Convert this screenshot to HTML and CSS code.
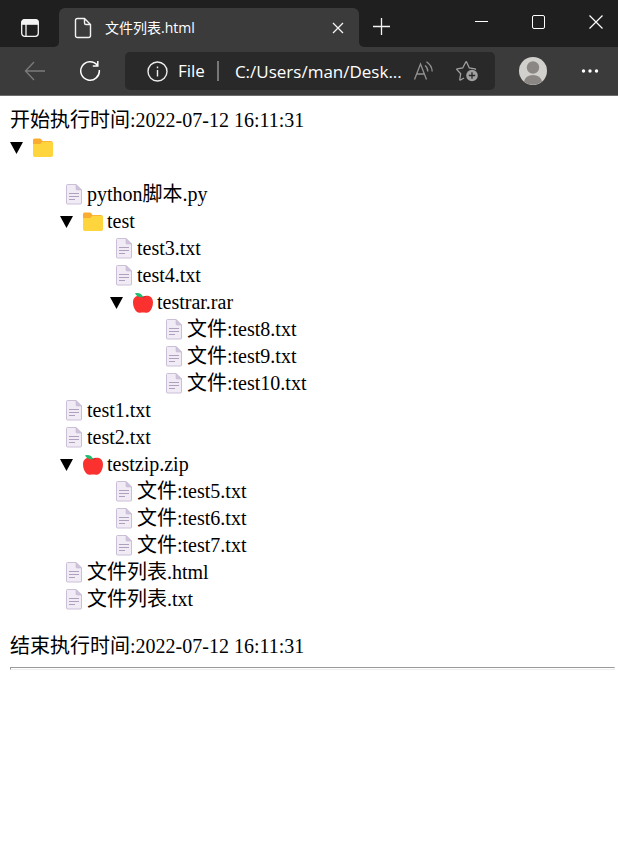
FILE: index.html
```html
<!DOCTYPE html>
<html lang="zh-CN">
<head>
<meta charset="utf-8">
<meta name="viewport" content="width=device-width, initial-scale=1">
<title>文件列表.html</title>
<link rel="stylesheet" href="styles.css">
</head>
<body>
<svg class="sprite" aria-hidden="true">
  <symbol id="file" viewBox="0 0 27 27">
    <path d="M6.500 4.500q0-1 1-1H16l5.500 5.500V22q0 1-1 1h-13q-1 0-1-1z" fill="#f1ebf6" stroke="#cabfd6"/>
    <path d="M16 3.500v4.500q0 1 1 1h4.500z" fill="#cfc4dc" stroke="#c5b8d2" stroke-width=".6"/>
    <path d="M9 12.500h10M9 15.500h10M9 18.500h6" stroke="#afa0bd" stroke-width="1.200"/>
  </symbol>
  <symbol id="folder" viewBox="0 0 20 20">
    <path d="M0 2q0-1.500 1.500-1.500h5.200q.8 0 1.300.6L9.500 3H18q1.500 0 1.500 1.500V9H0z" fill="#f9ac30"/>
    <path d="M0 6h6.500q.7 0 1.200-.5l1.200-1.200q.5-.5 1.200-.5H18.500q1.500 0 1.500 1.500v12q0 1.700-1.700 1.700H1.700Q0 19 0 17.300z" fill="#ffd53e"/>
  </symbol>
  <symbol id="apple" viewBox="0 0 20 20">
    <path d="M10 3.400C14 1.800 20 2.500 20 9.500c0 4-1.500 7-3.700 9.200-1.700 1.500-4.200.9-6.300.9s-4.600.6-6.300-.9C1.500 16.500 0 13.500 0 9.500 0 2.500 6 1.800 10 3.400z" fill="#fa312f"/>
    <path d="M7 3.300q3 2 6 0" fill="none" stroke="#c8222b" stroke-width=".8"/>
    <path d="M2 .2Q8.500-.8 10 4.200 4.200 5 2 .2z" fill="#20bd70"/>
  </symbol>
  <symbol id="marker" viewBox="0 0 13 12"><path d="M0 0h13L6.500 12z"/></symbol>
</svg>

<header class="browser">
  <div class="tabbar">
    <button class="tool tab-actions" aria-label="Tab actions"><svg width="20" height="20" viewBox="0 0 20 20" fill="none" stroke="#f4f4f4" stroke-width="1.300"><rect x="1.700" y="1.700" width="16.600" height="16.600" rx="3"/><path d="M2 4.500q0-2.500 2.500-2.500h11Q18 2 18 4.500v1.700H2z" fill="#f4f4f4"/><path d="M6 6v12"/></svg></button>
    <div class="tab">
      <svg width="18" height="22" viewBox="0 0 18 22" fill="none" stroke="#f2f2f2" stroke-width="1.400"><path d="M1.500 3.500Q1.500 1.500 3.500 1.500H10.500L16.500 7.500V18.500Q16.500 20.500 14.500 20.500H3.500Q1.500 20.500 1.500 18.500zM10.500 1.500V6q0 1.500 1.500 1.500h4.500"/></svg>
      <span class="tab-title">文件列表.html</span>
      <button class="close-tab" aria-label="Close tab"><svg width="12" height="12" viewBox="0 0 12 12" stroke="#f4f4f4" stroke-width="1.300"><path d="M1 1l10 10M11 1L1 11"/></svg></button>
    </div>
    <button class="tool new-tab" aria-label="New tab"><svg width="19" height="19" viewBox="0 0 19 19" stroke="#f4f4f4" stroke-width="1.300"><path d="M1 9.500h17M9.500 1v17"/></svg></button>
    <div class="window-controls">
      <button class="tool" aria-label="Minimize"><svg width="14" height="14" viewBox="0 0 14 14" stroke="#fff"><path d="M0 6.500h13"/></svg></button>
      <button class="tool" aria-label="Maximize"><svg width="14" height="14" viewBox="0 0 14 14" fill="none" stroke="#fff"><rect x=".5" y=".5" width="12" height="13" rx="1.500"/></svg></button>
      <button class="tool" aria-label="Close"><svg width="14" height="14" viewBox="0 0 14 14" stroke="#fff" stroke-width="1.200"><path d="M.5.5l13 13M13.500.5l-13 13"/></svg></button>
    </div>
  </div>
  <div class="toolbar">
    <button class="tool" aria-label="Back"><svg width="22" height="20" viewBox="0 0 22 20" fill="none" stroke="#7c7c7c" stroke-width="1.300"><path d="M21 10H1.500M10 1L1.500 10l8.500 9"/></svg></button>
    <button class="tool" aria-label="Refresh"><svg width="22" height="22" viewBox="0 0 22 22" fill="none" stroke="#fff" stroke-width="1.500"><path d="M18.200 5A9.300 9.300 0 1 0 20.300 10M18.800 1v5h-5"/></svg></button>
    <div class="address">
      <svg width="21" height="21" viewBox="0 0 21 21" fill="none" stroke="#eee" stroke-width="1.400"><circle cx="10.500" cy="10.500" r="9.500"/><path d="M10.500 9v6.500M10.500 5.500v1.700"/></svg>
      <label class="scheme" for="url">File</label>
      <input class="url" id="url" type="text" value="C:/Users/man/Desk...">
      <button class="tool" aria-label="Read aloud"><svg width="21" height="20" viewBox="0 0 21 20" fill="none" stroke="#929292" stroke-width="1.300"><path d="M1.500 18.500L7.500 3l6 15.500M3.600 13h7.800M12 4.500q2.800 2 2.800 6M13.500.8q5.500 3.700 5.700 9.700"/></svg></button>
      <button class="tool" aria-label="Add to favorites"><svg width="23" height="22" viewBox="0 0 23 22" fill="none"><path d="M8 18l-3.500 2q-.8.300-.7-.6l.9-5.700L.9 9.700q-.5-.7.3-.9l5.500-.8L9.800 2q.4-.7.800 0l2.700 6 5.700.8q.9.200.2.900" stroke="#a0a0a0" stroke-width="1.300"/><circle cx="16" cy="15.500" r="5.800" fill="#a0a0a0"/><path d="M12.800 15.500h6.400M16 12.300v6.400" stroke="#292929" stroke-width="1.300"/></svg></button>
    </div>
    <button class="tool profile" aria-label="Profile"><svg width="28" height="28" viewBox="0 0 28 28"><circle cx="14" cy="14" r="14" fill="#d2d0cd"/><circle cx="14" cy="10.500" r="6.200" fill="#8b8784"/><path d="M5 24.700Q6.500 18 14 18t9 6.700Q14 31 5 24.700z" fill="#8b8784"/></svg></button>
    <button class="tool menu" aria-label="Settings and more"><svg width="18" height="4" viewBox="0 0 18 4" fill="#fff"><circle cx="2.500" cy="2" r="1.700"/><circle cx="9" cy="2" r="1.700"/><circle cx="15.500" cy="2" r="1.700"/></svg></button>
  </div>
</header>

<main class="page">
  <p class="time">开始执行时间:2022-07-12 16:11:31</p>
  <details open>
    <summary><svg class="marker"><use href="#marker"/></svg><svg class="kind"><use href="#folder"/></svg></summary>
    <ul class="root">
      <li class="file"><svg><use href="#file"/></svg>python脚本.py</li>
      <li>
        <details open>
          <summary><svg class="marker"><use href="#marker"/></svg><svg class="kind"><use href="#folder"/></svg>test</summary>
          <ul>
            <li class="file"><svg><use href="#file"/></svg>test3.txt</li>
            <li class="file"><svg><use href="#file"/></svg>test4.txt</li>
            <li>
              <details open>
                <summary><svg class="marker"><use href="#marker"/></svg><svg class="kind"><use href="#apple"/></svg>testrar.rar</summary>
                <ul>
                  <li class="file"><svg><use href="#file"/></svg>文件:test8.txt</li>
                  <li class="file"><svg><use href="#file"/></svg>文件:test9.txt</li>
                  <li class="file"><svg><use href="#file"/></svg>文件:test10.txt</li>
                </ul>
              </details>
            </li>
          </ul>
        </details>
      </li>
      <li class="file"><svg><use href="#file"/></svg>test1.txt</li>
      <li class="file"><svg><use href="#file"/></svg>test2.txt</li>
      <li>
        <details open>
          <summary><svg class="marker"><use href="#marker"/></svg><svg class="kind"><use href="#apple"/></svg>testzip.zip</summary>
          <ul>
            <li class="file"><svg><use href="#file"/></svg>文件:test5.txt</li>
            <li class="file"><svg><use href="#file"/></svg>文件:test6.txt</li>
            <li class="file"><svg><use href="#file"/></svg>文件:test7.txt</li>
          </ul>
        </details>
      </li>
      <li class="file"><svg><use href="#file"/></svg>文件列表.html</li>
      <li class="file"><svg><use href="#file"/></svg>文件列表.txt</li>
    </ul>
  </details>
  <p class="time">结束执行时间:2022-07-12 16:11:31</p>
  <hr>
</main>
</body>
</html>
```
FILE: styles.css
```css
* {
  box-sizing: border-box;
}

body {
  margin: 0;
  background: #fff;
  color: #000;
}

.sprite {
  position: absolute;
  width: 0;
  height: 0;
}

button {
  padding: 0;
  border: 0;
  background: none;
  color: inherit;
}

/* Browser frame */
.browser {
  background: #3b3b3b;
  border-bottom: 1px solid #6c6c6c;
  color: #fff;
  font-family: "Open Sans", "Noto Sans CJK SC", sans-serif;
}

.browser svg {
  display: block;
  flex: none;
}

.tool {
  display: flex;
  flex: none;
  align-items: center;
  justify-content: center;
  width: 44px;
  height: 44px;
}

.tabbar {
  display: flex;
  height: 47px;
  background: linear-gradient(to top, #3b3b3b 8px, #1f1f1f 8px);
}

.tab-actions {
  width: 59px;
  height: 47px;
  padding-top: 8px;
  background: #1f1f1f;
  border-bottom-right-radius: 5px;
}

.tab {
  display: flex;
  flex: 0 1 300px;
  align-items: center;
  min-width: 0;
  margin-top: 8px;
  padding: 0 15px;
  background: #3b3b3b;
  border-radius: 6px 6px 0 0;
}

.tab-title {
  flex: 1;
  margin-left: 13px;
  font-size: 14px;
  line-height: 20px;
  white-space: nowrap;
}

.new-tab {
  height: 47px;
  padding-top: 6px;
}

.new-tab,
.window-controls {
  background: #1f1f1f;
}

.new-tab {
  border-bottom-left-radius: 5px;
}

.window-controls {
  display: flex;
  flex: 1;
  justify-content: flex-end;
  gap: 13px;
}

.toolbar {
  display: flex;
  align-items: center;
  height: 48px;
  padding: 0 6px 0 13px;
  gap: 11px;
}

.address {
  display: flex;
  flex: 1;
  align-items: center;
  min-width: 0;
  height: 38px;
  margin-left: 2px;
  padding: 0 12px 0 22px;
  background: #292929;
  border-radius: 5px;
  font-size: 17px;
}

.address .tool {
  width: 32px;
}

.address .tool + .tool {
  margin-left: 12px;
}

.scheme {
  margin-left: 10px;
  padding-right: 12px;
  border-right: 2px solid #777;
  line-height: 20px;
}

.url {
  flex: 1;
  min-width: 0;
  height: 24px;
  margin-left: 16px;
  padding: 0;
  border: 0;
  background: none;
  color: inherit;
  font: inherit;
}

.profile {
  margin-left: 5px;
}

.menu {
  margin-left: 2px;
}

/* File tree */
.page {
  padding: 11px 3px 11px 10px;
  font: 20px/27px "Liberation Serif", "Noto Sans CJK SC", serif;
}

.time {
  margin: 0;
}

summary {
  display: flex;
  align-items: center;
  height: 27px;
  list-style: none;
}

summary::-webkit-details-marker {
  display: none;
}

.marker {
  width: 13px;
  height: 12px;
  margin-right: 10px;
}

.kind {
  width: 20px;
  height: 20px;
  margin-right: 4px;
}

ul {
  margin: 0;
  padding: 0 0 0 50px;
  list-style: none;
}

.root {
  margin: 20px 0;
}

.file {
  display: flex;
  align-items: center;
  height: 27px;
}

.file svg {
  width: 27px;
  height: 27px;
}

hr {
  height: 3px;
  margin: 7px 0;
  border: 1px solid;
  border-color: #9a9a9a #eee #eee #9a9a9a;
}
```
